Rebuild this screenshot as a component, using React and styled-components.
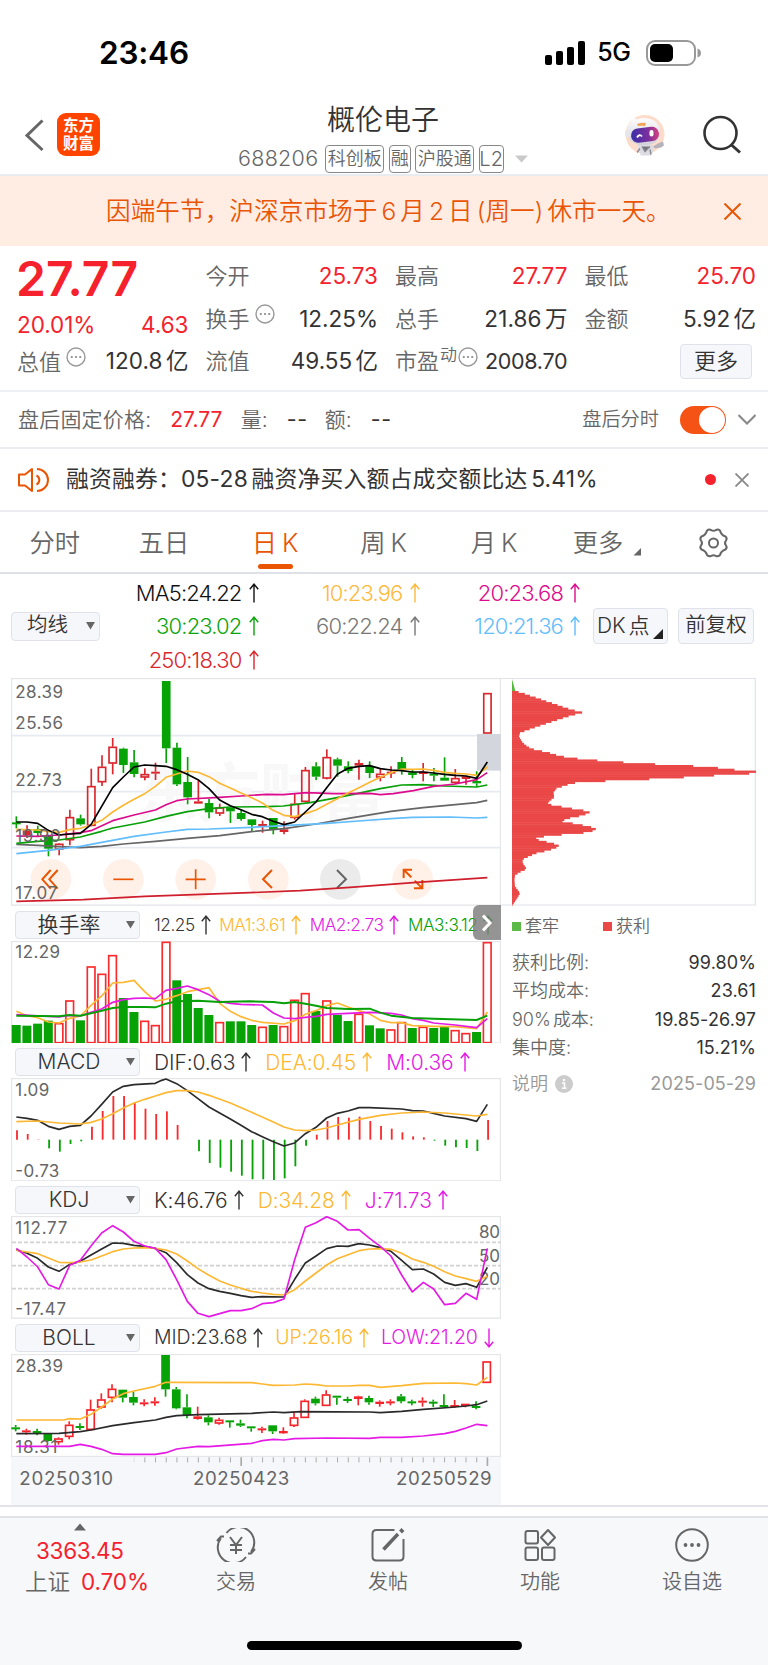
import React from "react";
import styled, { createGlobalStyle } from "styled-components";

const RED = "#f5222d";
const ORANGE = "#ea5504";
const GREY = "#666";
const DARK = "#333";
const AMBER = "#fdb833";
const PURPLE = "#e51ae5";
const GREEN = "#06a206";
const FONT = 'Inter, "Noto Sans CJK SC", sans-serif';

const GlobalStyle = createGlobalStyle`
  * { box-sizing: border-box; }
  body { margin: 0; background: #fff; font-family: ${FONT}; font-weight: 350; word-spacing: -3px; color: ${DARK}; }
  svg { display: block; flex: none; }
`;

const Screen = styled.div`
  width: 768px;
  height: 1665px;
  display: flex;
  flex-direction: column;
  overflow: hidden;
  background: #fff;
`;

const T = styled.span`
  font-size: ${(p) => p.$s}px;
  font-weight: ${(p) => p.$w || "inherit"};
  color: ${(p) => p.$c || "inherit"};
  letter-spacing: ${(p) => p.$ls || 0}px;
  margin-left: ${(p) => p.$ml || 0}px;
  margin-right: ${(p) => -(p.$ls || 0)}px;
  width: ${(p) => (p.$wd ? `${p.$wd}px` : "auto")};
  flex: none;
  line-height: 1;
  white-space: nowrap;
`;

const Figure = styled(T)`
  font-weight: 400;
`;

const StatusBar = styled.div`
  height: 98px;
  padding: 7px 67px 0 99px;
  display: flex;
  align-items: center;
  color: #000;
`;

const Battery = styled.svg`
  margin-left: 15px;
`;

const Spacer = styled.div`
  flex: 1;
`;

const NavBar = styled.header`
  height: 78px;
  border-bottom: 2px solid #e9ecef;
  display: flex;
  align-items: flex-start;
  padding: 0 27px 0 24px;
`;

const Logo = styled.div`
  width: 43px;
  height: 43px;
  margin: 15px 0 0 13px;
  border-radius: 9px;
  background: #ff4400;
  color: #fff;
  display: flex;
  flex-direction: column;
  align-items: center;
  justify-content: center;
  font: 700 15.5px/17.5px ${FONT};
`;

const TitleBlock = styled.div`
  width: 290px;
  margin-left: 138px;
  display: flex;
  flex-direction: column;
`;

const TitleLine = styled.div`
  height: 46.5px;
  padding: 0 0 2.5px 89px;
  display: flex;
  align-items: center;
`;

const CodeLine = styled.div`
  height: 28px;
  display: flex;
  align-items: center;
  color: ${GREY};
`;

const Tag = styled.span`
  width: ${(p) => p.$w}px;
  height: 28px;
  margin-left: ${(p) => p.$ml || 4.5}px;
  border: 1.5px solid #888;
  border-radius: 4px;
  display: flex;
  align-items: center;
  justify-content: center;
  font-size: ${(p) => p.$s || 18}px;
  line-height: 1;
  white-space: nowrap;
`;

const Banner = styled.div`
  height: 70px;
  background: #ffede4;
  color: ${ORANGE};
  display: flex;
  align-items: center;
  justify-content: space-between;
  padding: 0 27px 0 106px;
`;

const QuotePanel = styled.section`
  height: 146px;
  padding: 9px 11px 9px 17px;
  border-bottom: 2px solid #edf0f4;
  display: grid;
  grid-template-columns: 171.5px 172.5px 172.5px 171.5px;
  column-gap: 17px;
`;

const QuoteColumn = styled.div`
  display: grid;
  grid-template-rows: ${(p) => p.$rows || "42.5px 42.5px 42.5px"};
`;

const QuoteCell = styled.div`
  display: flex;
  align-items: center;
  justify-content: space-between;
`;

const Label = styled.span`
  display: flex;
  align-items: center;
  color: ${GREY};
  font-size: 22px;
  line-height: 1;
  white-space: nowrap;
  svg { margin: -9px 0 0 5px; }
`;

const Superscript = styled.span`
  font-size: 17px;
  margin: -12px -4px 0 1px;
`;

const Button = styled.button`
  font-family: inherit;
  font-weight: inherit;
  word-spacing: inherit;
  color: ${DARK};
  background: #f6f7fa;
  border: 1.5px solid #dfe2ea;
  border-radius: 4px;
  padding: 0 0 1px;
  width: ${(p) => p.$w}px;
  height: ${(p) => p.$h}px;
  margin-right: ${(p) => p.$mr || 0}px;
  font-size: ${(p) => p.$s}px;
  line-height: 1;
  display: flex;
  align-items: center;
  justify-content: center;
  gap: 1px;
  white-space: nowrap;
  flex: none;
`;

const AverageSelect = styled(Button)`
  justify-content: space-between;
  padding: 0 4px 1px 15px;
`;

const MenuButton = styled(Button)`
  justify-content: space-between;
  padding: 0 4px 1px 3px;
  svg { align-self: flex-end; margin-bottom: 3px; }
`;

const StripRow = styled.div`
  height: ${(p) => p.$h}px;
  border-bottom: 2px solid ${(p) => p.$line || "#ebedf3"};
  display: flex;
  align-items: center;
  padding: 0 ${(p) => p.$pr}px 0 18px;
  color: ${(p) => p.$c || GREY};
`;

const Toggle = styled.div`
  width: 46px;
  height: 28px;
  margin: 0 12px 0 21px;
  border-radius: 14px;
  background: #f55316;
  padding: 1px;
  display: flex;
  justify-content: flex-end;
  &::after {
    content: "";
    width: 26px;
    height: 26px;
    border-radius: 50%;
    background: #fff;
  }
`;

const Dot = styled.span`
  width: 11px;
  height: 11px;
  margin-right: 19px;
  border-radius: 50%;
  background: ${RED};
`;

const Tabs = styled.nav`
  height: 62px;
  border-bottom: 2px solid #dfe1e8;
  display: flex;
`;

const Tab = styled.div`
  width: ${(p) => p.$w}px;
  height: 60px;
  padding-top: 2px;
  flex: none;
  display: flex;
  flex-direction: column;
  align-items: center;
  color: ${(p) => (p.$active ? ORANGE : GREY)};
  &::after {
    content: "";
    width: 35px;
    height: 5px;
    border-radius: 2.5px;
    background: ${(p) => (p.$active ? ORANGE : "transparent")};
  }
`;

const TabLabel = styled.div`
  height: 50px;
  padding-top: 8px;
  display: flex;
  align-items: center;
  gap: 5px;
  font-size: 25.3px;
  line-height: 1;
  white-space: nowrap;
`;

const TabTools = styled.svg`
  margin-left: -12px;
`;

const AveragePanel = styled.section`
  height: 104px;
  padding: 0 0 0 11px;
  display: flex;
  align-items: center;
`;

const AverageGrid = styled.div`
  width: 480px;
  margin-right: 13px;
  display: grid;
  grid-template-columns: 158.5px 161px 160.5px;
  grid-auto-rows: 33.5px;
`;

const AverageCell = styled.div`
  display: flex;
  align-items: center;
  justify-content: flex-end;
  gap: 7px;
  font-size: 22px;
  letter-spacing: -0.85px;
  line-height: 1;
  color: ${(p) => p.$c};
`;

const ChartArea = styled.main`
  height: 829px;
  display: flex;
  padding-left: 11px;
  border-bottom: 2px solid #e2e3e8;
`;

const ChartColumn = styled.div`
  width: 490px;
  display: flex;
  flex-direction: column;
  position: relative;
`;

const IndicatorHeader = styled.div`
  height: 35px;
  padding: 3px 0 0 4px;
  display: flex;
  align-items: center;
`;

const Readings = styled.div`
  display: flex;
  align-items: center;
  margin-left: 14px;
  gap: ${(p) => p.$gap}px;
  font-size: ${(p) => p.$s}px;
  letter-spacing: ${(p) => p.$ls || 0}px;
  line-height: 1;
  white-space: nowrap;
`;

const Reading = styled.span`
  display: flex;
  align-items: center;
  gap: 6px;
  color: ${(p) => p.$c};
`;

const SelectFace = styled(Button)`
  width: 125px;
  height: 28px;
  justify-content: space-between;
  padding: 0 4px 1px 17px;
  span { flex: 1; text-align: center; padding-right: 20px; }
`;

const Handle = styled.div`
  position: absolute;
  right: 0;
  top: 227px;
  width: 28px;
  height: 35px;
  border-radius: 6px 0 0 6px;
  background: rgba(125, 125, 125, 0.82);
  display: flex;
  align-items: center;
  justify-content: center;
`;

const Axis = styled.div`
  flex: 1;
  background: #f6f7fa;
`;

const CostColumn = styled.aside`
  width: 267px;
  padding-right: 12px;
`;

const Legend = styled.div`
  height: 40px;
  margin-bottom: 2.5px;
  padding-left: 11px;
  display: flex;
  align-items: center;
  color: ${GREY};
`;

const Swatch = styled.i`
  width: 9px;
  height: 9px;
  margin: 0 4px 0 ${(p) => p.$ml || 0}px;
  background: ${(p) => p.$c};
`;

const CostRow = styled.div`
  height: 28.5px;
  padding-left: 11px;
  margin-top: ${(p) => p.$mt || 0}px;
  display: flex;
  align-items: center;
  justify-content: space-between;
  font-size: 18px;
  line-height: 1;
  color: ${(p) => p.$c || GREY};
  b { font-weight: 400; color: ${(p) => p.$c || DARK}; letter-spacing: 0.1px; }
  span { display: flex; align-items: center; gap: 7px; }
`;

const BottomBar = styled.footer`
  margin-top: 9px;
  height: 149px;
  border-top: 2px solid #dfe3e8;
  background: #f7f8fa;
  display: flex;
  flex-direction: column;
  align-items: center;
`;

const BottomItems = styled.div`
  width: 768px;
  height: 123px;
  display: flex;
`;

const BottomItem = styled.div`
  width: ${(p) => p.$w || 152}px;
  padding-top: ${(p) => p.$pt || 10}px;
  display: flex;
  flex-direction: column;
  align-items: center;
  color: ${GREY};
`;

const IndexLine = styled.div`
  height: 31.5px;
  margin-top: ${(p) => p.$mt || 0}px;
  padding-left: ${(p) => p.$pl || 0}px;
  display: flex;
  align-items: center;
`;

const HomeIndicator = styled.div`
  width: 275px;
  height: 9px;
  border-radius: 5px;
  background: #000;
`;

const Caption = styled(T)`
  margin-top: 9.5px;
`;

function Stroke({ w, h, d, c = GREY, sw = 2, children, cap = "butt" }) {
  return (
    <svg width={w} height={h} viewBox={`0 0 ${w} ${h}`} fill="none" stroke={c} strokeWidth={sw} strokeLinecap={cap}>
      {d && <path d={d} />}
      {children}
    </svg>
  );
}

const Up = () => <Stroke w={10} h={20} c="currentColor" sw={1.4} d="M5 19.5V1M.8 6.2 5 1.2l4.2 5" />;
const Down = () => <Stroke w={10} h={20} c="currentColor" sw={1.4} d="M5 .5V19M.8 13.8 5 18.8l4.2-5" />;
const Caret = () => (
  <svg width="9" height="9" viewBox="0 0 9 9"><path d="M0 1h9L4.5 8.5z" fill="#666" /></svg>
);
const Corner = ({ size = 8, c = GREY }) => (
  <svg width={size} height={size} viewBox="0 0 8 8"><path d="M8 0v8H0z" fill={c} /></svg>
);
const Hint = () => (
  <svg width="20" height="20" viewBox="0 0 20 20">
    <circle cx="10" cy="10" r="9" fill="none" stroke="#999" strokeWidth="1.4" />
    <g fill="#888"><circle cx="5.8" cy="10" r="1.1" /><circle cx="10" cy="10" r="1.1" /><circle cx="14.2" cy="10" r="1.1" /></g>
  </svg>
);

const Robot = () => (
  <g>
    <defs>
      <linearGradient id="visor" x1="0" x2="1"><stop offset="0" stopColor="#3a2fa8" /><stop offset=".6" stopColor="#7b2f9d" /><stop offset="1" stopColor="#d8407c" /></linearGradient>
      <linearGradient id="shell" x1="0" y1="0" x2="0" y2="1"><stop offset="0" stopColor="#fff" /><stop offset="1" stopColor="#cfd0d8" /></linearGradient>
    </defs>
    <circle cx="22" cy="21" r="19.500" fill="#fddccb" />
    <path d="M15 31h14l2 5-3 6H18l-3-6z" fill="#dcdce2" />
    <path d="M19 33l3 5 5-5M17 35l-3 4M27 36l1 5" fill="#77747c" stroke="#8c8a92" strokeWidth="1.4" />
    <path d="M30 33l5-3 5-2 1 4-3 2-6 1z" fill="#b5b2ba" />
    <path d="M4 17Q4 11 8 9L8 4Q11 2 13 6Q20 3 29 6Q37 10 37 19Q37 27 30 30Q19 34 10 29Q5 27 4 17Z" fill="url(#shell)" />
    <path d="M14 10.500q5-2 9-1l-1 3q-4-.5-7 0z" fill="#f0a45c" />
    <rect x="8" y="14" width="28" height="14.500" rx="7" fill="url(#visor)" transform="rotate(-7 22 21)" />
    <path d="M14 24q2.500-4 5-1" fill="none" stroke="#fff" strokeWidth="1.800" />
    <rect x="26.500" y="16.500" width="4" height="6.500" rx="2" fill="#fff" />
    <ellipse cx="4.500" cy="20" rx="2.500" ry="4" fill="#e6e5ea" />
  </g>
);

/* Chart coordinates are thirds of a pixel; each trading day is 32.12 units wide. */
const dayX = (i) => 49 + i * 32.12;

const Plot = ({ top, bottom, children }) => (
  <svg width="490" height={(bottom - top) / 3} viewBox={`33 ${top} 1470 ${bottom - top}`} fontFamily={FONT}>
    <rect x="34.500" y={top + 1.5} width="1467" height={bottom - top - 3} fill="#fff" stroke="#e4e6ea" strokeWidth="4" />
    {children}
  </svg>
);

const Line = ({ p, c, w = 5 }) => <polyline points={p} fill="none" stroke={c} strokeWidth={w} strokeLinejoin="round" />;

const Mark = ({ x = 46, y, w, end, children, s = 51 }) => (
  <text x={end ? x - w : x} y={y} fontSize={s} fontWeight="400" fill={GREY} textLength={w}>{children}</text>
);

/* [kind, bodyTop, bodyBottom, high, low] : g falling, r rising solid, h rising hollow */
function Candles({ data, shift = 0, red = "#d9272d" }) {
  return data.map(([k, a, b, hi, lo], i) => {
    const x = dayX(i) + shift;
    const c = k === "g" ? GREEN : red;
    return (
      <g key={i} stroke={c} strokeWidth="5">
        {hi < a && <path d={`M${x} ${hi}V${a}`} />}
        {lo > b && <path d={`M${x} ${b}V${lo}`} />}
        {k === "h" ? (
          <rect x={x - 11} y={a + 2} width="22" height={b - a - 2} fill="none" strokeWidth="5" />
        ) : (
          <rect x={x - 13} y={a} width="26" height={Math.max(6, b - a)} fill={c} stroke="none" />
        )}
      </g>
    );
  });
}

const dayCandles = [
  ["g",458,462,440,476],["r",482,497,467,505],["g",478,490,468,500],["g",498,537,498,560],["h",522,538,520,557],
  ["h",442,510,420,527],["g",446,464,435,468],["h",349,467,297,470],["h",291,336,257,349],["h",231,280,205,314],
  ["g",237,286,234,310],["g",278,313,241,323],["h",313,322,296,332],["r",306,312,279,331],["g",34,236,34,280],
  ["g",234,344,219,349],["g",337,383,262,404],["r",395,402,332,402],["g",400,428,388,446],["h",413,430,402,439],
  ["g",414,425,414,460],["g",430,448,420,453],["g",449,466,449,484],["r",463,470,453,489],["g",445,479,445,494],
  ["r",479,487,455,494],["h",402,443,370,450],["h",301,395,292,398],["g",290,321,278,331],["h",262,325,239,329],
  ["g",269,288,264,321],["g",290,304,275,311],["r",280,288,270,330],["g",290,310,275,325],["h",312,322,298,335],
  ["r",306,312,290,325],["g",277,300,262,315],["g",308,316,298,326],["r",306,313,280,335],["g",312,318,295,335],
  ["g",324,333,263,333],["h",325,338,298,343],["r",320,328,318,345],["g",334,341,305,350],["h",70,190,70,190],
];
const bollCandles = [
  ["g",322,327,315,334],["r",331,337,326,344],["g",333,338,326,346],["g",341,363,341,365],["h",355,365,352,374],
  ["h",314,349,304,358],["g",318,323,310,330],["h",268,328,239,332],["h",238,261,220,266],["h",206,232,193,247],
  ["g",209,233,209,247],["g",231,248,215,256],["r",247,252,238,259],["r",244,249,232,257],["g",105,208,105,230],
  ["g",208,265,201,268],["g",262,285,223,295],["r",289,297,260,299],["g",292,307,286,316],["h",299,309,293,314],
  ["g",301,305,301,323],["g",310,317,299,321],["g",319,325,319,335],["r",325,330,320,339],["g",316,334,316,342],
  ["r",333,340,322,342],["h",292,316,277,321],["h",242,292,238,293],["g",236,250,230,256],["h",223,256,211,258],
  ["g",227,233,227,254],["g",237,242,230,249],["r",229,237,227,256],["g",234,247,227,254],["r",245,252,241,260],
  ["r",244,249,238,256],["g",229,244,222,250],["g",244,248,239,256],["r",242,248,232,260],["g",245,249,239,261],
  ["g",255,259,223,259],["r",255,260,240,264],["r",251,258,251,262],["g",258,263,244,268],["h",124,187,124,187],
];
const turnover = "g375 g377 g371 g362 r370 r302 g361 r200 r222 r166 g294 g336 r363 r376 r126 g241 g282 g324 g345 r367 g364 g364 g375 r381 g375 r379 r300 r280 g333 r302 g345 g363 r342 g376 g385 r389 r367 g384 r381 g384 g378 r391 r400 g396 r127".split(" ");
const macdBars = [272,283,299,326,336,313,305,261,214,169,169,188,207,223,215,256,300,335,370,384,396,408,419,419,421,416,380,318,285,244,232,234,231,244,259,267,278,290,293,303,318,323,325,334,241];

const ToolButton = ({ x, grey, d, w = 5 }) => (
  <g>
    <circle cx={x} cy="629" r="61" fill={grey ? "#ebebeb" : "#fff0e8"} />
    <path d={d} transform={`translate(${x} 629)`} fill="none" stroke={grey ? "#666" : ORANGE} strokeWidth={w} />
  </g>
);

const DayChart = () => (
  <Plot top={25} bottom={708}>
    <path d="M34 198H1502M34 366H1502M34 534H1502" stroke="#e8eaf1" strokeWidth="5" />
    <text x="405" y="440" fontSize="190" fontWeight="700" fill="#f8f8f9" textLength="750">东方财富</text>
    <rect x="1431" y="193" width="72" height="110" fill="#d3d7dd" />
    <ToolButton x={153} w={6} d="M-1 -28L-26 0L-1 28M20 -28L-5 0L20 28" />
    <ToolButton x={370} d="M-30 0H30" />
    <ToolButton x={587} d="M-30 0H30M0 -30V30" />
    <ToolButton x={805} w={6} d="M11 -28L-16 0L11 26" />
    <ToolButton x={1021} grey w={6} d="M-10 -28L17 0L-10 26" />
    <ToolButton x={1238} w={6} d="M-27 -4V-29H-2M-26 -28L-4 -6M4 27H29V2M28 26L6 4" />
    <Candles data={dayCandles} />
    <Line c="#666" p="49,524 113,527 177,531 241,534 305,530 370,523 466,515 562,506 659,498 755,486 852,477 948,463 1045,446 1173,425 1269,414 1366,405 1430,399 1462,392" />
    <Line c="#62bdfc" p="49,552 145,542 241,530 305,518 402,500 498,487 562,479 627,478 755,473 852,468 980,461 1077,454 1173,447 1237,443 1350,442 1430,445 1462,443" />
    <Line c="#cf1f2c" p="49,695 250,690 434,680 750,669 900,663 1050,653 1250,638 1462,624" />
    <Line c="#08a008" p="49,521 113,515 177,511 241,502 305,485 338,475 434,457 498,440 562,426 627,417 691,412 800,411 850,409 930,399 1000,386 1060,374 1141,357 1205,346 1269,345 1334,349 1430,352 1462,346" />
    <Line c="#dd0c8c" p="49,499 113,500 177,496 241,489 273,483 338,453 402,436 466,421 498,405 530,393 562,388 659,383 723,379 800,374 850,375 920,369 1000,372 1109,371 1141,375 1180,372 1240,363 1301,350 1366,343 1430,330 1462,309" />
    <Line c={AMBER} p="49,479 113,481 145,486 177,488 209,480 241,476 273,466 305,452 338,427 370,407 402,389 434,372 466,350 498,323 530,313 562,304 594,308 627,321 659,341 691,355 723,370 755,384 787,400 819,422 852,437 884,441 916,432 948,421 980,404 1012,387 1044,370 1077,354 1109,338 1141,323 1173,309 1205,298 1237,299 1269,298 1301,302 1334,308 1366,311 1398,313 1430,317 1462,292" />
    <Line c="#000" p="49,457 81,457 113,461 145,482 177,496 209,493 241,491 273,465 305,410 338,354 370,322 402,292 434,286 466,288 498,290 530,300 562,314 594,330 627,357 659,391 691,408 723,420 755,434 787,441 819,455 852,465 884,457 916,427 948,397 980,354 1012,314 1044,296 1077,290 1109,288 1141,297 1173,301 1205,303 1237,307 1269,307 1301,310 1334,314 1366,317 1398,319 1430,326 1462,277" />
    <Mark y={84} w={143}>28.39</Mark>
    <Mark y={179} w={143}>25.56</Mark>
    <Mark y={348} w={140}>22.73</Mark>
    <Mark y={518} w={136}>19.90</Mark>
    <Mark y={689} w={126}>17.07</Mark>
  </Plot>
);

const TurnoverChart = () => (
  <Plot top={123} bottom={431}>
    {turnover.map((v, i) => {
      const y = +v.slice(1);
      const x = dayX(i) - 1;
      return v[0] === "g" ? (
        <rect key={i} x={x - 13} y={y} width="27" height={430 - y} fill={GREEN} />
      ) : (
        <rect key={i} x={x - 11} y={y + 1} width="23" height={427 - y} fill="none" stroke="#fa2a2d" strokeWidth="5" />
      );
    })}
    <Mark y={175} w={134}>12.29</Mark>
    <Line c={AMBER} p="49,334 81,347 113,353 145,366 177,369 209,355 241,348 273,316 305,288 338,249 370,247 402,241 434,275 466,303 498,298 530,287 562,275 594,269 627,263 659,310 691,334 723,350 755,361 787,367 852,372 884,362 916,343 948,332 980,317 1012,309 1044,321 1077,332 1109,342 1141,361 1173,368 1205,368 1237,377 1301,379 1366,380 1398,383 1430,386 1462,336" />
    <Line c={PURPLE} p="49,344 177,351 209,346 241,348 273,337 305,327 338,307 370,299 402,295 434,294 466,296 498,271 530,265 562,258 594,269 627,284 659,304 691,310 723,313 787,315 820,339 852,354 884,356 916,352 948,349 980,343 1044,340 1109,337 1173,340 1205,345 1237,356 1270,361 1301,369 1366,375 1430,383 1462,356" />
    <Line c="#08a008" w={6} p="49,347 177,349 209,345 241,347 305,332 338,324 370,321 434,321 466,322 498,311 530,304 594,302 659,306 750,304 820,306 852,310 884,306 916,311 948,317 980,324 1044,327 1109,326 1141,338 1173,347 1237,354 1301,356 1430,360 1462,347" />
  </Plot>
);

const MacdChart = () => (
  <Plot top={115} bottom={425}>
    {macdBars.map((y, i) => y !== 300 && (
      <path key={i} d={`M${dayX(i) + 2} 300V${y}`} stroke={y < 300 ? "#fa2a2d" : GREEN} strokeWidth="5.5" />
    ))}
    <Mark y={169} w={102}>1.09</Mark>
    <Mark y={412} w={132}>-0.73</Mark>
    <Line c="#2a2a2a" p="49,232 81,236 113,242 145,260 177,269 209,260 241,257 273,229 305,194 338,157 370,140 402,135 466,131 485,122 498,118 530,132 562,153 594,177 627,202 659,220 691,238 723,257 755,276 787,291 820,306 852,319 884,310 916,282 948,263 980,235 1012,221 1044,214 1077,204 1109,204 1205,208 1237,213 1270,214 1301,221 1334,229 1398,237 1430,245 1462,194" />
    <Line c={AMBER} p="49,246 113,244 177,250 241,253 273,248 305,238 338,222 370,205 402,190 434,179 466,169 498,159 530,153 562,153 594,157 627,167 691,190 755,218 820,247 852,262 884,271 916,273 948,271 980,265 1012,256 1077,239 1141,227 1205,220 1270,217 1334,220 1430,229 1462,224" />
  </Plot>
);

const KdjChart = () => (
  <Plot top={109} bottom={417}>
    <path d="M36 188H1502M36 258H1502M36 327H1502" stroke="#d2d2d2" strokeWidth="5.5" strokeDasharray="12 6" />
    <Mark y={162} w={156}>112.77</Mark>
    <Mark y={405} w={152}>-17.47</Mark>
    <Mark x={1500} end y={176} w={63}>80</Mark>
    <Mark x={1500} end y={247} w={63}>50</Mark>
    <Mark x={1500} end y={316} w={63}>20</Mark>
    <Line c="#2a2a2a" p="49,210 81,221 113,236 145,262 177,275 209,254 241,245 273,226 305,208 338,190 370,191 402,197 434,200 466,206 498,219 530,249 562,285 594,310 627,327 659,335 691,341 723,348 755,353 787,351 852,352 884,299 916,250 948,229 980,207 1012,199 1044,200 1077,192 1109,196 1141,204 1173,215 1205,242 1237,270 1270,268 1301,283 1334,308 1366,317 1398,312 1430,323 1462,263" />
    <Line c={AMBER} p="49,212 81,217 113,222 145,235 177,248 209,249 241,247 273,241 305,229 338,216 370,208 402,205 434,204 466,206 498,211 530,223 562,244 594,267 627,287 659,304 691,316 723,326 755,335 787,340 820,344 852,346 884,330 916,304 948,280 980,256 1012,237 1044,225 1077,213 1109,208 1141,207 1173,209 1205,221 1237,238 1270,248 1301,260 1334,276 1366,289 1398,297 1430,305 1462,290" />
    <Line c={PURPLE} p="49,206 81,232 113,262 145,315 177,328 209,257 241,242 273,199 305,160 338,138 370,157 402,185 434,199 466,206 498,240 530,300 562,365 594,401 627,411 659,402 691,393 723,393 755,387 787,372 820,369 852,358 884,240 916,143 948,129 980,111 1012,125 1044,151 1077,150 1109,176 1141,200 1173,229 1205,286 1237,337 1270,308 1301,328 1334,375 1366,371 1398,341 1430,359 1462,206" />
  </Plot>
);

const BollChart = () => (
  <Plot top={102} bottom={411}>
    <Candles data={bollCandles} shift={-2} red="#f5232a" />
    <Mark y={156} w={143}>28.39</Mark>
    <Mark y={399} w={126}>18.31</Mark>
    <Line c={AMBER} p="49,300 190,300 209,296 241,297 273,283 305,261 338,237 370,221 402,213 466,199 498,187 755,188 787,192 820,196 884,195 916,192 948,194 980,198 1044,198 1077,196 1109,196 1141,202 1205,197 1270,190 1366,189 1398,191 1430,195 1462,172" />
    <Line c="#2a2a2a" p="49,341 177,340 241,335 273,330 338,317 402,308 466,300 498,292 530,287 594,284 755,280 820,276 852,278 900,275 1109,276 1141,278 1205,274 1270,268 1366,261 1398,258 1430,254 1462,243" />
    <Line c={PURPLE} p="49,379 209,379 241,373 273,379 305,388 338,401 370,403 466,403 498,398 530,387 594,379 627,380 755,370 787,362 820,358 852,360 884,356 980,354 1109,355 1141,352 1205,352 1270,348 1334,341 1366,334 1398,324 1430,313 1462,317" />
  </Plot>
);

const DateAxis = () => (
  <Axis>
    <svg width="490" height="48" viewBox="33 410 1470 144" fontFamily={FONT}>
      {Array.from({ length: 34 }, (_, k) => k + 11).map((i) => {
        const major = i === 21 || i === 44;
        return <path key={i} d={`M${dayX(i)} 411V${major ? 437 : 426}`} stroke={i < 12 ? "#ddd" : "#aaa"} strokeWidth={major ? 5 : 3} />;
      })}
      <Mark x={58} y={494} w={281} s={56}>20250310</Mark>
      <Mark x={579} y={494} w={289} s={56}>20250423</Mark>
      <Mark x={1188} y={494} w={287} s={56}>20250529</Mark>
    </svg>
  </Axis>
);

const outline = [[45,64],[68,70],[90,78],[115,86],[140,95],[165,103],[190,112],[215,120],[247,128],[215,136],[190,144],[165,152],[135,162],[108,171],[80,181],[60,188],[57,200],[65,215],[75,225],[90,235],[108,241],[140,247],[170,256],[200,263],[245,268],[290,272],[358,277],[460,283],[566,288],[634,292],[684,298],[725,302],[768,305],[768,310],[686,314],[600,319],[506,325],[396,330],[296,334],[228,338],[200,345],[170,355],[160,368],[163,382],[150,392],[141,403],[180,410],[207,415],[250,422],[270,427],[250,436],[215,443],[195,448],[187,456],[232,463],[265,470],[290,476],[276,484],[248,489],[200,493],[148,497],[112,503],[105,508],[125,513],[160,521],[180,529],[155,538],[130,545],[108,550],[85,560],[68,568],[68,580],[80,597],[60,606],[45,616],[43,630],[45,650],[60,670],[50,687],[37,706]];
const widthAt = (y) => {
  const k = outline.findIndex((q) => q[1] >= y);
  if (k <= 0) return outline[0][0];
  const [x0, y0] = outline[k - 1];
  const [x1, y1] = outline[k];
  return x0 + ((x1 - x0) * (y - y0)) / (y1 - y0);
};
const levels = Array.from({ length: 116 }, (_, k) => 64 + k * 5.55).filter((y) => y < 704);

const CostChart = () => (
  <svg width="255" height="228" viewBox="3 25 765 684">
    <path d="M3 26.500H766V706H3" fill="none" stroke="#dfe2ea" strokeWidth="3.500" />
    <path d="M36 28L46 64H36z" fill="#52b93c" />
    {levels.map((y) => (
      <rect key={y} x="36" y={y} width={widthAt(y + 2.8) - 36} height="7" fill="#ea4747" />
    ))}
  </svg>
);

const Indicator = ({ name, s = 21, nameSize = 21, gap = 14, ls = -0.1, items }) => (
  <IndicatorHeader>
    <SelectFace $s={nameSize}><span>{name}</span><Caret /></SelectFace>
    <Readings $s={s} $gap={gap} $ls={ls}>
      {items.map(([text, c, down]) => (
        <Reading key={text} $c={c}>{text}{down ? <Down /> : <Up />}</Reading>
      ))}
    </Readings>
  </IndicatorHeader>
);

const averages = [
  ["MA5:24.22", "#111"], ["10:23.96", "#fdb93c"], ["20:23.68", "#dd0c8c"],
  ["30:23.02", "#0aa40a"], ["60:22.24", "#777"], ["120:21.36", "#62bdfc"],
  ["250:18.30", "#d9272d"],
];

export default function App() {
  return (
    <Screen>
      <GlobalStyle />
      <StatusBar>
        <T $s={31.5} $w={600} $ls={-0.2}>23:46</T>
        <Spacer />
        <svg width="40" height="24" viewBox="0 0 40 24">
          <rect x="0" y="14" width="7" height="10" rx="2" /><rect x="11" y="10" width="7" height="14" rx="2" />
          <rect x="22" y="6" width="7" height="18" rx="2" /><rect x="33" y="0" width="7" height="24" rx="2" />
        </svg>
        <T $s={25} $w={500} $ls={-0.3} $ml={12.5}>5G</T>
        <Battery width="55" height="26" viewBox="0 0 55 26">
          <rect x="1" y="1" width="48" height="24" rx="8" fill="none" stroke="#999" strokeWidth="2" />
          <rect x="4" y="4" width="23" height="18" rx="5" />
          <path d="M51.500 8.500q3.500 1 3.500 4.500t-3.500 4.500z" fill="#999" />
        </Battery>
      </StatusBar>

      <NavBar>
        <svg width="20" height="60" viewBox="0 0 20 60" fill="none" stroke="#666" strokeWidth="3"><path d="M18.500 22.500L3 37.500L18.500 52" /></svg>
        <Logo><span>东方</span><span>财富</span></Logo>
        <TitleBlock>
          <TitleLine><T $s={28}>概伦电子</T></TitleLine>
          <CodeLine>
            <T $s={21.5} $ls={0.3}>688206</T>
            <Tag $w={59} $ml={7}>科创板</Tag><Tag $w={22}>融</Tag><Tag $w={59}>沪股通</Tag><Tag $w={25} $s={20}>L2</Tag>
            <svg width="24" height="10" viewBox="0 0 24 10"><path d="M11 1.500h13l-6.500 7z" fill="#c9c9c9" /></svg>
          </CodeLine>
        </TitleBlock>
        <Spacer />
        <svg width="120" height="60" viewBox="0 0 120 60">
          <g transform="translate(2 15.500)"><Robot /></g>
          <circle cx="99.500" cy="35" r="16" fill="none" stroke="#333" strokeWidth="2.600" />
          <path d="M110 46.500l9 8" stroke="#333" strokeWidth="3" />
        </svg>
      </NavBar>

      <Banner>
        <T $s={24.6} $ls={0.08}>因端午节，沪深京市场于 6 月 2 日 (周一) 休市一天。</T>
        <Stroke w={17} h={17} c={ORANGE} d="M.5 .5L16.500 16.500M16.500 .5L.5 16.500" />
      </Banner>

      <QuotePanel>
        <QuoteColumn $rows="48px 45px 27px">
          <QuoteCell><T $s={48} $w={600} $c={RED} $ls={0} $ml={-1}>27.77</T></QuoteCell>
          <QuoteCell><Figure $s={22.5} $c={RED} $ls={-0.05}>20.01%</Figure><Figure $s={22.5} $c={RED} $ls={-0.05}>4.63</Figure></QuoteCell>
          <QuoteCell><Label>总值<Hint /></Label><Figure $s={22.5} $ls={0.1}>120.8 亿</Figure></QuoteCell>
        </QuoteColumn>
        <QuoteColumn>
          <QuoteCell><Label>今开</Label><Figure $s={22.5} $c={RED}>25.73</Figure></QuoteCell>
          <QuoteCell><Label>换手<Hint /></Label><Figure $s={22.5}>12.25%</Figure></QuoteCell>
          <QuoteCell><Label>流值</Label><Figure $s={22.5}>49.55 亿</Figure></QuoteCell>
        </QuoteColumn>
        <QuoteColumn>
          <QuoteCell><Label>最高</Label><Figure $s={22.5} $c={RED}>27.77</Figure></QuoteCell>
          <QuoteCell><Label>总手</Label><Figure $s={22.5} $ls={0.1}>21.86 万</Figure></QuoteCell>
          <QuoteCell><Label>市盈<Superscript>动</Superscript><Hint /></Label><Figure $s={21.5} $ls={-0.3}>2008.70</Figure></QuoteCell>
        </QuoteColumn>
        <QuoteColumn>
          <QuoteCell><Label>最低</Label><Figure $s={22.5} $c={RED}>25.70</Figure></QuoteCell>
          <QuoteCell><Label>金额</Label><Figure $s={22.5}>5.92 亿</Figure></QuoteCell>
          <QuoteCell><Spacer /><Button $w={72} $h={35} $mr={4} $s={22}>更多</Button></QuoteCell>
        </QuoteColumn>
      </QuotePanel>

      <StripRow $h={57} $pr={12}>
        <T $s={21} $ls={0.2} $wd={152.5}>盘后固定价格:</T>
        <Figure $s={21} $c={RED} $wd={70.5}>27.77</Figure>
        <T $s={21} $wd={46}>量:</T><Figure $s={21.5} $c={DARK} $ls={0.6} $wd={38}>--</Figure>
        <T $s={21} $wd={46} $ml={0.6}>额:</T><Figure $s={21.5} $c={DARK} $ls={0.6}>--</Figure>
        <Spacer />
        <T $s={19.2}>盘后分时</T>
        <Toggle />
        <Stroke w={18} h={11} c="#888" d="M.5 1L9 9.500L17.500 1" />
      </StripRow>

      <StripRow $h={63} $pr={19} $c={DARK}>
        <Stroke w={31} h={26} c={ORANGE} sw={2}>
          <path d="M1 8.500v9.500M1 7.500h6l7-5.500v22l-7-5.500H1zM18.500 8.500a5 5 0 0 1 0 9M19 2a11 11 0 0 1 0 22" strokeLinejoin="round" />
        </Stroke>
        <Figure $s={22.8} $ml={17} $ls={0.2}>融资融券：05-28 融资净买入额占成交额比达 5.41%</Figure>
        <Spacer />
        <Dot />
        <Stroke w={14} h={14} c="#888" sw={1.8} d="M.5 .5L13.500 13.500M13.500 .5L.5 13.500" />
      </StripRow>

      <Tabs>
        <Tab $w={109.5}><TabLabel>分时</TabLabel></Tab>
        <Tab $w={109}><TabLabel>五日</TabLabel></Tab>
        <Tab $w={113} $active><TabLabel><span>日</span><span>K</span></TabLabel></Tab>
        <Tab $w={104}><TabLabel><span>周</span><span>K</span></TabLabel></Tab>
        <Tab $w={117}><TabLabel><span>月</span><span>K</span></TabLabel></Tab>
        <Tab $w={91}><TabLabel>更多</TabLabel></Tab>
        <TabTools width="120" height="60" viewBox="0 0 120 60">
          <path d="M9 36v7.500H1.500z" fill={GREY} />
          <g fill="none" stroke="#666" strokeWidth="2" strokeLinejoin="round" transform="translate(28.500 -.5)">
            <path d="M46.500 19Q48.500 17.500 50.500 18.500Q53 20 55.500 18.500Q57.500 17.500 59.500 19Q60.500 23.500 65 25Q67 27 65.500 29Q63.500 31.500 65.500 34Q67 36 65 38Q60.500 39.500 59.500 43.500Q57.500 45.500 55.500 44.500Q53 43 50.500 44.500Q48.500 45.500 46.500 43.500Q45.500 39.500 41 38Q39 36 40.500 34Q42.500 31.500 40.500 29Q39 27 41 25Q45.500 23.500 46.500 19Z" />
            <circle cx="53" cy="31.500" r="4.500" />
          </g>
        </TabTools>
      </Tabs>

      <AveragePanel>
        <AverageSelect $w={89} $h={29} $s={20.5}>均线<Caret /></AverageSelect>
        <AverageGrid>
          {averages.map(([t, c]) => <AverageCell key={t} $c={c}>{t}<Up /></AverageCell>)}
        </AverageGrid>
        <MenuButton $w={75} $h={36} $mr={10} $s={21}>DK 点<Corner size={10} c="#222" /></MenuButton>
        <Button $w={76} $h={36} $s={20.5}>前复权</Button>
      </AveragePanel>

      <ChartArea>
        <ChartColumn>
          <DayChart />
          <Indicator name="换手率" s={17.2} gap={8.5} ls={-0.45} items={[["12.25", DARK], ["MA1:3.61", AMBER], ["MA2:2.73", PURPLE], ["MA3:3.12", GREEN]]} />
          <TurnoverChart />
          <Indicator name="MACD" items={[["DIF:0.63", DARK], ["DEA:0.45", AMBER], ["M:0.36", PURPLE]]} />
          <MacdChart />
          <Indicator name="KDJ" items={[["K:46.76", DARK], ["D:34.28", AMBER], ["J:71.73", PURPLE]]} />
          <KdjChart />
          <Indicator name="BOLL" s={19.5} gap={12} items={[["MID:23.68", DARK], ["UP:26.16", AMBER], ["LOW:21.20", PURPLE, true]]} />
          <BollChart />
          <DateAxis />
          <Handle><Stroke w={10} h={18} c="#fff" sw={3} d="M1 1.500L8 9L1 16.500" /></Handle>
        </ChartColumn>
        <CostColumn>
          <CostChart />
          <Legend>
            <Swatch $c="#5bba47" /><T $s={17}>套牢</T>
            <Swatch $c="#ea4747" $ml={44} /><T $s={17}>获利</T>
          </Legend>
          <CostRow><span>获利比例:</span><b>99.80%</b></CostRow>
          <CostRow><span>平均成本:</span><b>23.61</b></CostRow>
          <CostRow><span>90% 成本:</span><b>19.85-26.97</b></CostRow>
          <CostRow><span>集中度:</span><b>15.21%</b></CostRow>
          <CostRow $c="#999" $mt={7}>
            <span>说明
              <svg width="18" height="18" viewBox="0 0 18 18"><circle cx="9" cy="9" r="9" fill="#ccc" /><path d="M7 8h2.500v5M7 13.200h4.500" stroke="#fff" strokeWidth="1.500" fill="none" /><circle cx="9" cy="5" r="1.200" fill="#fff" /></svg>
            </span>
            <b>2025-05-29</b>
          </CostRow>
        </CostColumn>
      </ChartArea>

      <BottomBar>
        <BottomItems>
          <BottomItem $w={160} $pt={5}>
            <svg width="12" height="8" viewBox="0 0 12 8"><path d="M6 .5L12 7.500H0z" fill="#666" /></svg>
            <IndexLine $mt={4}><Figure $s={22.5} $c={RED} $ls={-0.3}>3363.45</Figure></IndexLine>
            <IndexLine $pl={14}><T $s={22.5}>上证</T><Figure $s={22.5} $c={RED} $ls={-0.1} $ml={11}>0.70%</Figure></IndexLine>
          </BottomItem>
          <BottomItem>
            <Stroke w={40} h={34} sw={2}>
              <path d="M10.500 5A15.500 15.500 0 0 1 35 24M30 29A15.500 15.500 0 0 1 5 10M1 13l4-4.500h3M39 21l-4 4.500h-3M14 9l6 8 6-8M20 17v9M14 17h12M14 22h12" />
            </Stroke>
            <Caption $s={20}>交易</Caption>
          </BottomItem>
          <BottomItem>
            <Stroke w={34} h={34} sw={2}>
              <path d="M23.500 2H5.500Q1.500 2 1.500 6V28.500Q1.500 32.500 5.500 32.500H28.500Q32.500 32.500 32.500 28.500V11" />
              <path d="M12.500 21.500L27 6" strokeWidth="3.500" /><path d="M29.500 4L32 1.500" strokeWidth="4" />
            </Stroke>
            <Caption $s={20}>发帖</Caption>
          </BottomItem>
          <BottomItem>
            <Stroke w={32} h={34} sw={2}>
              <rect x="1.500" y="3" width="12.500" height="12.500" rx="2" /><rect x="1.500" y="19.500" width="12.500" height="12.500" rx="2" />
              <rect x="18" y="19.500" width="12.500" height="12.500" rx="2" /><path d="M24 2l7 7.500-7 7.500-7-7.500z" strokeLinejoin="round" />
            </Stroke>
            <Caption $s={20}>功能</Caption>
          </BottomItem>
          <BottomItem>
            <Stroke w={34} h={34} sw={2}>
              <circle cx="17" cy="17" r="15.800" />
              <g fill="#666" stroke="none"><circle cx="10.500" cy="17" r="1.900" /><circle cx="17" cy="17" r="1.900" /><circle cx="23.500" cy="17" r="1.900" /></g>
            </Stroke>
            <Caption $s={20}>设自选</Caption>
          </BottomItem>
        </BottomItems>
        <HomeIndicator />
      </BottomBar>
    </Screen>
  );
}
